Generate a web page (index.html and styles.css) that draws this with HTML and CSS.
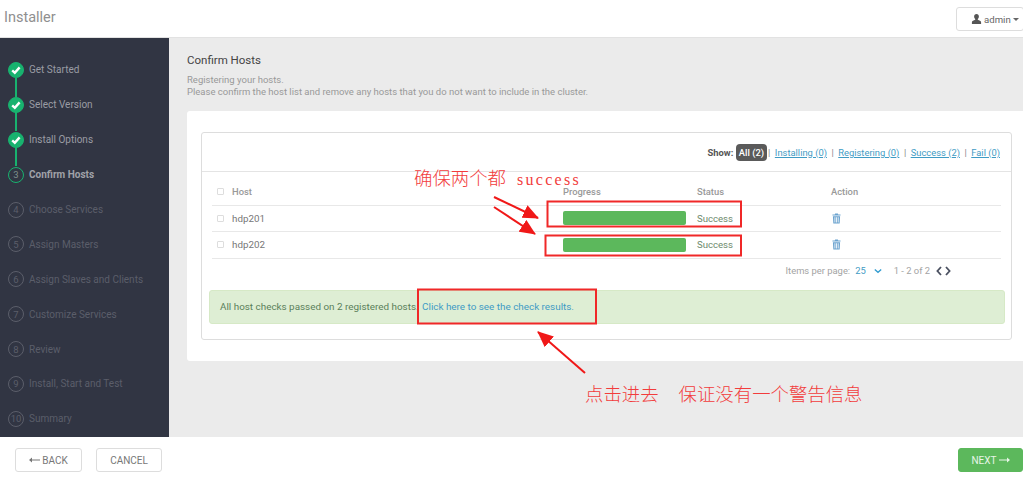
FILE: index.html
```html
<!DOCTYPE html>
<html lang="en">
<head>
  <meta charset="UTF-8" />
  <title>Installer</title>
  <link rel="stylesheet" href="styles.css">
</head>
<body>
  <header class="topbar">
    <span class="brand">Installer</span>
    <button class="user-btn">
      <svg class="user-icon" viewBox="0 0 12 12"><path d="M6 0.5c-1.7 0-2.6 1.3-2.6 2.9 0 1.1 0.5 2.1 1.2 2.7v0.8c-1.6 0.5-3.6 1.2-3.6 2.6v2h10v-2c0-1.4-2-2.1-3.6-2.6v-0.8c0.7-0.6 1.2-1.6 1.2-2.7 0-1.6-0.9-2.9-2.6-2.9z"/></svg>
      admin
      <span class="caret"></span>
    </button>
  </header>

  <div class="middle">
    <nav class="wizard">
      <div class="step done"><span class="dot"><svg viewBox="0 0 16 16"><path d="M4.2 8.4l2.6 2.4 4.8-5.4" /></svg></span>Get Started</div>
      <div class="step done"><span class="dot"><svg viewBox="0 0 16 16"><path d="M4.2 8.4l2.6 2.4 4.8-5.4" /></svg></span>Select Version</div>
      <div class="step done"><span class="dot"><svg viewBox="0 0 16 16"><path d="M4.2 8.4l2.6 2.4 4.8-5.4" /></svg></span>Install Options</div>
      <div class="step current"><span class="dot">3</span>Confirm Hosts</div>
      <div class="step"><span class="dot">4</span>Choose Services</div>
      <div class="step"><span class="dot">5</span>Assign Masters</div>
      <div class="step"><span class="dot">6</span>Assign Slaves and Clients</div>
      <div class="step"><span class="dot">7</span>Customize Services</div>
      <div class="step"><span class="dot">8</span>Review</div>
      <div class="step"><span class="dot">9</span>Install, Start and Test</div>
      <div class="step"><span class="dot">10</span>Summary</div>
    </nav>

    <main class="content">
      <h2>Confirm Hosts</h2>
      <p class="intro">Registering your hosts.<br>Please confirm the host list and remove any hosts that you do not want to include in the cluster.</p>

      <section class="card">
        <div class="hosts-box">
          <div class="filters">
            <b>Show:</b>
            <span class="pill">All (2)</span>
            <span class="sep">|</span>
            <a href="#">Installing (0)</a>
            <span class="sep">|</span>
            <a href="#">Registering (0)</a>
            <span class="sep">|</span>
            <a href="#">Success (2)</a>
            <span class="sep">|</span>
            <a href="#">Fail (0)</a>
          </div>

          <table class="hosts">
            <colgroup>
              <col class="col-check"><col class="col-host"><col class="col-progress"><col class="col-status"><col>
            </colgroup>
            <thead>
              <tr>
                <th><span class="check"></span></th>
                <th>Host</th>
                <th>Progress</th>
                <th>Status</th>
                <th>Action</th>
              </tr>
            </thead>
            <tbody>
              <tr>
                <td><span class="check"></span></td>
                <td>hdp201</td>
                <td><div class="bar"></div></td>
                <td class="ok">Success</td>
                <td><svg class="trash" viewBox="0 0 10 12"><path d="M3.5 0.5h3l0.4 1h2.6v1.3h-9v-1.3h2.6zM1 3.4h8l-0.5 8.1h-7zM2.8 4.6v5.8h0.9v-5.8zM4.6 4.6v5.8h0.9v-5.8zM6.4 4.6v5.8h0.9v-5.8z" fill-rule="evenodd"/></svg></td>
              </tr>
              <tr>
                <td><span class="check"></span></td>
                <td>hdp202</td>
                <td><div class="bar"></div></td>
                <td class="ok">Success</td>
                <td><svg class="trash" viewBox="0 0 10 12"><path d="M3.5 0.5h3l0.4 1h2.6v1.3h-9v-1.3h2.6zM1 3.4h8l-0.5 8.1h-7zM2.8 4.6v5.8h0.9v-5.8zM4.6 4.6v5.8h0.9v-5.8zM6.4 4.6v5.8h0.9v-5.8z" fill-rule="evenodd"/></svg></td>
              </tr>
            </tbody>
          </table>

          <div class="pager">
            <span>Items per page:</span>
            <span class="per-page">25</span>
            <svg class="chev-down" viewBox="0 0 10 6"><path d="M1 1l4 3.6 4-3.6"/></svg>
            <span class="range">1 - 2 of 2</span>
            <svg class="chev" viewBox="0 0 6 10"><path d="M5 1L1.4 5 5 9"/></svg>
            <svg class="chev" viewBox="0 0 6 10"><path d="M1 1l3.6 4L1 9"/></svg>
          </div>

          <div class="alert">All host checks passed on 2 registered hosts. <a href="#">Click here to see the check results.</a></div>
        </div>
      </section>
    </main>
  </div>

  <footer class="actions">
    <button class="btn back"><svg class="arrow" viewBox="0 0 11 6"><path d="M0 3l3-2.6v2.1h8v1h-8v2.1z"/></svg>BACK</button>
    <button class="btn cancel">CANCEL</button>
    <button class="btn next">NEXT<svg class="arrow" viewBox="0 0 11 6"><path d="M11 3l-3-2.6v2.1h-8v1h8v2.1z"/></svg></button>
  </footer>

  <!-- red notes drawn on top of the screenshot -->
  <svg class="marks" viewBox="0 0 1023 480">
    <defs>
      <marker id="head" markerWidth="16" markerHeight="14" refX="15" refY="7" markerUnits="userSpaceOnUse" orient="auto">
        <path d="M0 0L16 7L0 14z" fill="#f01818"/>
      </marker>
    </defs>
    <rect x="547.5" y="201.5" width="193.5" height="25" />
    <rect x="545.5" y="235.5" width="195.5" height="20" />
    <rect x="418" y="289.5" width="178" height="34" />
    <line x1="494" y1="197" x2="538" y2="218" marker-end="url(#head)" />
    <line x1="494" y1="207" x2="535" y2="234" marker-end="url(#head)" />
    <line x1="585" y1="373" x2="538" y2="332" marker-end="url(#head)" />
  </svg>
  <div class="note note-top">确保两个都<span class="latin">success</span></div>
  <div class="note note-bottom">点击进去<span class="gap"></span>保证没有一个警告信息</div>
</body>
</html>
```

FILE: styles.css
```css
* {
  box-sizing: border-box;
}

html, body {
  margin: 0;
  height: 480px;
  overflow: hidden;
}

body {
  position: relative;
  display: flex;
  flex-direction: column;
  font-family: Roboto, "Liberation Sans", sans-serif;
  font-size: 10px;
  color: #666;
  background-color: white;
}

a {
  color: #3f9bc4;
}

button {
  font-family: inherit;
  cursor: pointer;
}

.topbar {
  height: 38px;
  flex: none;
  display: flex;
  justify-content: space-between;
  align-items: flex-start;
  padding: 7px 0 0 4px;
  border-bottom: 1px solid #e2e2e2;
}

.brand {
  margin-top: 1px;
  font-size: 14.5px;
  line-height: 20px;
  color: #8f8f8f;
}

.user-btn {
  width: 68px;
  height: 24px;
  margin-right: -1px;
  padding: 0 0 0 14px;
  display: flex;
  align-items: center;
  gap: 2px;
  font-size: 9.6px;
  color: #666;
  background-color: white;
  border: 1px solid #ddd;
  border-radius: 3px;
}

.user-icon {
  width: 11px;
  height: 12px;
  fill: #555;
}

.caret {
  width: 0;
  height: 0;
  border-left: 3px solid transparent;
  border-right: 3px solid transparent;
  border-top: 3px solid #666;
}

.middle {
  flex: 1;
  display: flex;
  min-height: 0;
}

/* wizard steps */
.wizard {
  width: 169px;
  flex: none;
  padding-top: 14.5px;
  background-color: #313543;
}

.step {
  position: relative;
  height: 34.9px;
  display: flex;
  align-items: center;
  gap: 5px;
  padding-left: 8px;
  font-size: 10px;
  color: #5b5e6a;
}

.dot {
  width: 16px;
  height: 16px;
  flex: none;
  display: flex;
  align-items: center;
  justify-content: center;
  font-size: 9.5px;
  border: 1px solid #5b5e6a;
  border-radius: 50%;
}

.dot svg {
  width: 16px;
  height: 16px;
  flex: none;
  fill: none;
  stroke: white;
  stroke-width: 2.4;
}

.step.done {
  color: #9a9ca4;
}

.step.done .dot {
  background-color: #18b26f;
  border-color: #18b26f;
}

.step.done::after {
  content: "";
  position: absolute;
  left: 15px;
  top: 25px;
  width: 2px;
  height: 19px;
  background-color: #18b26f;
}

.step.current {
  font-weight: 700;
  color: #a0a2a9;
}

.step.current .dot {
  font-weight: 400;
  border-color: #18b26f;
  color: #7d8f8c;
}

/* main panel */
.content {
  flex: 1;
  min-width: 0;
  padding: 14px 0 0 18px;
  background-color: #ebebeb;
}

h2 {
  margin: 0;
  font-size: 11.5px;
  line-height: 16px;
  font-weight: 400;
  color: #444;
}

.intro {
  margin: 6px 0 0;
  font-size: 9.5px;
  line-height: 12.4px;
  color: #999;
}

.card {
  height: 250px;
  margin-top: 12px;
  padding: 21px 11px 0 14px;
  background-color: white;
  border-radius: 3px 0 0 3px;
}

.hosts-box {
  height: 208px;
  padding: 0 7px 0 7px;
  border: 1px solid #ddd;
  border-radius: 3px;
}

.filters {
  height: 39px;
  margin: 0 -7px;
  padding: 1px 10px 0 0;
  display: flex;
  justify-content: flex-end;
  align-items: center;
  gap: 3px;
  font-size: 9.4px;
  color: #666;
  border-bottom: 1px solid #e4e4e4;
}

.filters b {
  color: #555;
}

.filters a {
  margin: 0 1px;
}

.pill {
  margin-right: -2px;
  padding: 3px 2.5px;
  color: white;
  font-weight: 500;
  background-color: #5a5a5a;
  border-radius: 4px;
}

.sep {
  margin: 0 0.5px;
  color: #888;
}

.hosts {
  width: 789px;
  margin: 0 3px;
  table-layout: fixed;
  border-collapse: collapse;
}

.col-check {
  width: 20px;
}

.col-host {
  width: 331px;
}

.col-progress,
.col-status {
  width: 134px;
}

.hosts th {
  height: 33.5px;
  padding: 7px 0 0;
  text-align: left;
  font-size: 9.4px;
  font-weight: 500;
  color: #999;
  border-bottom: 1px solid #e8e8e8;
}

.hosts td {
  height: 26.5px;
  padding: 0 0 1px;
  font-size: 9.8px;
  color: #777;
  border-bottom: 1px solid #e8e8e8;
}

.hosts .ok {
  font-size: 9.6px;
  color: #6d8a6d;
}

.check {
  display: block;
  width: 7px;
  height: 7px;
  margin-left: 5px;
  background-color: white;
  border: 1px solid #ddd;
  border-radius: 1px;
}

.bar {
  width: 123px;
  height: 14px;
  background-color: #5cb85c;
  border-radius: 2px;
}

.trash {
  display: block;
  width: 9px;
  height: 11px;
  margin-left: 1px;
  fill: #6ba3cf;
}

.pager {
  height: 31px;
  padding-right: 57px;
  padding-bottom: 7px;
  margin-right: -2px;
  display: flex;
  justify-content: flex-end;
  align-items: center;
  gap: 5px;
  font-size: 9.4px;
  color: #a3a3a3;
}

.per-page {
  margin-right: 3px;
  color: #3f9bc4;
}

.range {
  margin: 0 1px 0 7px;
}

.chev-down {
  width: 8px;
  height: 6px;
  fill: none;
  stroke: #2f9bd0;
  stroke-width: 1.6;
}

.chev {
  width: 6px;
  height: 10px;
  margin-right: -2px;
  fill: none;
  stroke: #4a5060;
  stroke-width: 1.8;
}

.alert {
  height: 34px;
  margin: 0 -1px 0 0;
  padding: 0 0 1px 10px;
  display: flex;
  align-items: center;
  white-space: pre;
  font-size: 9.9px;
  color: #5a7f5a;
  background-color: #deeed4;
  border: 1px solid #d6e9c6;
  border-radius: 3px;
}

.alert a {
  margin-left: 1px;
  text-decoration: none;
}

/* footer buttons */
.actions {
  height: 43px;
  flex: none;
  display: flex;
  align-items: flex-start;
  gap: 14px;
  padding-top: 11px;
  padding-left: 15px;
}

.btn {
  height: 24px;
  padding: 0;
  display: flex;
  align-items: center;
  justify-content: center;
  gap: 2px;
  font-size: 10px;
  color: #777;
  background-color: white;
  border: 1px solid #ddd;
  border-radius: 3px;
}

.arrow {
  width: 11px;
  height: 6px;
  fill: currentColor;
}

.back {
  width: 67px;
}

.cancel {
  width: 66px;
}

.next {
  width: 65px;
  margin-left: auto;
  color: #e6f5e6;
  background-color: #5cb85c;
  border-color: #5cb85c;
}

/* annotations */
.marks {
  position: absolute;
  left: 0;
  top: 0;
  width: 1023px;
  height: 480px;
  pointer-events: none;
}

.marks rect {
  fill: none;
  stroke: #f02828;
  stroke-width: 2;
}

.marks line {
  stroke: #f01818;
  stroke-width: 2;
}

.note {
  position: absolute;
  font-family: "Noto Sans CJK SC", sans-serif;
  font-size: 18.4px;
  line-height: 24px;
  font-weight: 300;
  color: #f23c3c;
  white-space: pre;
}

.note-top {
  left: 414px;
  top: 165px;
}

.note-bottom {
  left: 585px;
  top: 381px;
}

.latin {
  margin-left: 11px;
  font-family: "Liberation Serif", serif;
  font-size: 16px;
  letter-spacing: 2.3px;
}

.gap {
  display: inline-block;
  width: 20px;
}
```
